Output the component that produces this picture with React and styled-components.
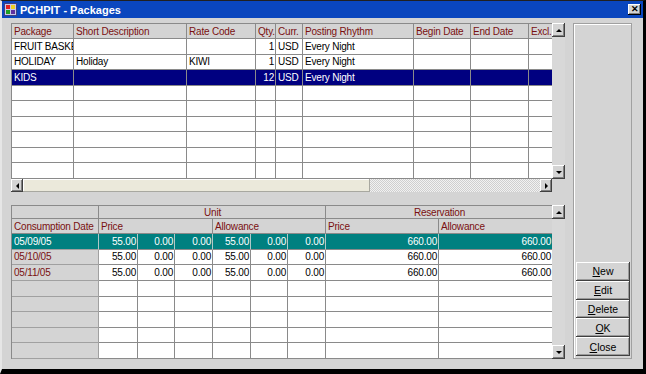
import React from 'react';
import styled, { createGlobalStyle, css } from 'styled-components';

const GlobalStyle = createGlobalStyle`
  body {
    margin: 0;
    background: #d4d4d4;
    font-family: "Liberation Sans", Arial, sans-serif;
    font-size: 10px;
  }
`;

const Window = styled.div`
  width: 646px;
  height: 374px;
  box-sizing: border-box;
  display: flex;
  flex-direction: column;
  background: #d4d4d4;
  border-top: 1px solid #202020;
  border-left: 2px solid #e6e6e6;
  border-right: 3px solid #000;
  border-bottom: 5px solid #000;
`;

const TitleBar = styled.div`
  height: 17px;
  flex: none;
  display: flex;
  align-items: center;
  padding: 0 2px;
  background: #0a46be;
  color: #fff;
`;

const TitleText = styled.span`
  font-weight: bold;
  font-size: 11px;
  margin-left: 3px;
  flex: 1;
`;

const CloseBox = styled.div`
  width: 13px;
  height: 11px;
  background: #d4d4d4;
  box-shadow: inset -1px -1px #000, inset 1px 1px #fff, inset -2px -2px #808080;
  display: flex;
  align-items: center;
  justify-content: center;
  color: #000;
  font-size: 9px;
  font-weight: bold;
  line-height: 1;
`;

const Body = styled.div`
  flex: 1;
  display: grid;
  grid-template-columns: 554px 59px;
  column-gap: 8px;
  padding: 5px 11px 10px 9px;
`;

const LeftColumn = styled.div`
  display: flex;
  flex-direction: column;
  gap: 13px;
`;

const GridBlock = styled.div`
  display: grid;
  grid-template-columns: 541px 13px;
  grid-template-rows: ${p => p.$rows};
`;

const Sheet = styled.div`
  display: grid;
  box-sizing: border-box;
  height: ${p => p.$height}px;
  grid-template-columns: ${p => p.$cols};
  grid-template-rows: ${p => p.$rows};
  border-top: 1px solid #8a8a8a;
  border-left: 1px solid #8a8a8a;
  background: #fff;
  overflow: hidden;
  letter-spacing: -0.2px;
`;

const Cell = styled.div`
  box-sizing: border-box;
  border-right: 1px solid #8a8a8a;
  border-bottom: 1px solid #8a8a8a;
  display: flex;
  align-items: center;
  justify-content: ${p => (p.$align === 'right' ? 'flex-end' : p.$align === 'center' ? 'center' : 'flex-start')};
  padding: 0 1px 0 2px;
  white-space: nowrap;
  overflow: hidden;
  min-width: 0;
  color: #000;
  background: #fff;
  grid-column: ${p => (p.$span ? `span ${p.$span}` : 'auto')};
  ${p =>
    p.$head &&
    css`
      background: #d4d4d4;
      color: #7a1010;
    `}
  ${p =>
    p.$side &&
    css`
      background: #d4d4d4;
      color: #7a1010;
      border-right-color: #a0a0a0;
      border-bottom-color: #a0a0a0;
    `}
  ${p =>
    p.$sel === 'navy' &&
    css`
      background: #000080;
      color: #fff;
    `}
  ${p =>
    p.$sel === 'teal' &&
    css`
      background: #008080;
      color: #fff;
      border-right-color: #b0c8c8;
    `}
`;

const VScroll = styled.div`
  display: flex;
  flex-direction: column;
  background: #d8d8d8;
`;

const Track = styled.div`
  flex: 1;
  background: ${p => (p.$checker ? 'repeating-conic-gradient(#cfcfcf 0 25%, #f2f2f2 0 50%) 0 0 / 2px 2px' : '#d8d8d8')};
`;

const ArrowBtn = styled.div`
  flex: none;
  width: ${p => (p.$h ? '12px' : '13px')};
  height: ${p => (p.$h ? '13px' : '14px')};
  box-sizing: border-box;
  background: #d4d4d4;
  box-shadow: inset -1px -1px #404040, inset 1px 1px #fff, inset -2px -2px #808080;
  display: flex;
  align-items: center;
  justify-content: center;
`;

const Tri = styled.span`
  width: 0;
  height: 0;
  border-style: solid;
  ${p => p.$dir === 'up' && 'border-width: 0 3px 3px 3px; border-color: transparent transparent #000 transparent;'}
  ${p => p.$dir === 'down' && 'border-width: 3px 3px 0 3px; border-color: #000 transparent transparent transparent;'}
  ${p => p.$dir === 'left' && 'border-width: 3px 3px 3px 0; border-color: transparent #000 transparent transparent;'}
  ${p => p.$dir === 'right' && 'border-width: 3px 0 3px 3px; border-color: transparent transparent transparent #000;'}
`;

const HScroll = styled.div`
  display: flex;
  align-items: stretch;
  height: 13px;
`;

const Thumb = styled.div`
  width: 347px;
  flex: none;
  background: #ebe9db;
  box-shadow: inset -1px -1px #a8a8a0, inset 1px 1px #fff;
`;

const Corner = styled.div`
  background: #d4d4d4;
`;

const SidePanel = styled.div`
  box-sizing: border-box;
  border: 1px solid #a0a0a0;
  box-shadow: inset 1px 1px #fff;
  display: flex;
  flex-direction: column;
  justify-content: flex-end;
  padding: 0 1px 2px 2px;
`;

const Button = styled.div`
  height: 18.8px;
  box-sizing: border-box;
  background: #d4d4d4;
  box-shadow: inset -1px -1px #404040, inset 1px 1px #fff, inset -2px -2px #9a9a9a;
  display: flex;
  align-items: center;
  justify-content: center;
  color: #000;
  font-size: 10.5px;
  u {
    text-decoration: underline;
  }
`;

const AppIcon = () => (
  <svg width="13" height="13" viewBox="0 0 13 13">
    <rect x="0.5" y="0.5" width="12" height="12" fill="#c8c8e8" stroke="#404080" />
    <rect x="2" y="2" width="4" height="4" fill="#e02020" />
    <rect x="7" y="2" width="4" height="4" fill="#f0d020" />
    <rect x="2" y="7" width="4" height="4" fill="#20a020" />
    <rect x="7" y="7" width="4" height="4" fill="#6030a0" />
  </svg>
);

const topCols = '62px 113px 69px 20px 27px 111px 57px 58px 24px';
const topHeads = ['Package', 'Short Description', 'Rate Code', 'Qty.', 'Curr.', 'Posting Rhythm', 'Begin Date', 'End Date', 'Excl.'];
const topRows = [
  ['FRUIT BASKET', '', '', '1', 'USD', 'Every Night', '', '', ''],
  ['HOLIDAY', 'Holiday', 'KIWI', '1', 'USD', 'Every Night', '', '', ''],
  ['KIDS', '', '', '12', 'USD', 'Every Night', '', '', ''],
];

const bottomCols = '87px 39px 37px 38px 38px 37px 38px 113px 114px';
const bottomRows = [
  ['05/09/05', '55.00', '0.00', '0.00', '55.00', '0.00', '0.00', '660.00', '660.00'],
  ['05/10/05', '55.00', '0.00', '0.00', '55.00', '0.00', '0.00', '660.00', '660.00'],
  ['05/11/05', '55.00', '0.00', '0.00', '55.00', '0.00', '0.00', '660.00', '660.00'],
];

const blank = n => Array.from({ length: n }, () => Array(9).fill(''));

const App = () => {
  const top = [...topRows, ...blank(6)];
  const bottom = [...bottomRows, ...blank(5)];

  return (
    <>
      <GlobalStyle />
      <Window>
        <TitleBar>
          <AppIcon />
          <TitleText>PCHPIT - Packages</TitleText>
          <CloseBox>✕</CloseBox>
        </TitleBar>
        <Body>
          <LeftColumn>
            <GridBlock $rows="156px 13px">
              <Sheet $height={156} $cols={topCols} $rows="15px repeat(9, 1fr)">
                {topHeads.map(h => (
                  <Cell key={h} $head>
                    {h}
                  </Cell>
                ))}
                {top.map((row, r) =>
                  row.map((v, c) => (
                    <Cell key={`${r}-${c}`} $align={c === 3 ? 'right' : 'left'} $sel={r === 2 ? 'navy' : undefined}>
                      {v}
                    </Cell>
                  ))
                )}
              </Sheet>
              <VScroll>
                <ArrowBtn>
                  <Tri $dir="up" />
                </ArrowBtn>
                <Track />
                <ArrowBtn>
                  <Tri $dir="down" />
                </ArrowBtn>
              </VScroll>
              <HScroll>
                <ArrowBtn $h>
                  <Tri $dir="left" />
                </ArrowBtn>
                <Thumb />
                <Track $checker />
                <ArrowBtn $h>
                  <Tri $dir="right" />
                </ArrowBtn>
              </HScroll>
              <Corner />
            </GridBlock>

            <GridBlock $rows="154px">
              <Sheet $height={154} $cols={bottomCols} $rows="13px 15px repeat(8, 1fr)">
                <Cell $head />
                <Cell $head $span={6} $align="center">
                  Unit
                </Cell>
                <Cell $head $span={2} $align="center">
                  Reservation
                </Cell>
                <Cell $head>Consumption Date</Cell>
                <Cell $head $span={3}>
                  Price
                </Cell>
                <Cell $head $span={3}>
                  Allowance
                </Cell>
                <Cell $head>Price</Cell>
                <Cell $head>Allowance</Cell>
                {bottom.map((row, r) =>
                  row.map((v, c) => (
                    <Cell
                      key={`${r}-${c}`}
                      $align={c === 0 ? 'left' : 'right'}
                      $side={c === 0}
                      $sel={r === 0 ? 'teal' : undefined}
                    >
                      {v}
                    </Cell>
                  ))
                )}
              </Sheet>
              <VScroll>
                <ArrowBtn>
                  <Tri $dir="up" />
                </ArrowBtn>
                <Track />
                <ArrowBtn>
                  <Tri $dir="down" />
                </ArrowBtn>
              </VScroll>
            </GridBlock>
          </LeftColumn>

          <SidePanel>
            <Button>
              <span>
                <u>N</u>ew
              </span>
            </Button>
            <Button>
              <span>
                <u>E</u>dit
              </span>
            </Button>
            <Button>
              <span>
                <u>D</u>elete
              </span>
            </Button>
            <Button>
              <span>
                <u>O</u>K
              </span>
            </Button>
            <Button>
              <span>
                <u>C</u>lose
              </span>
            </Button>
          </SidePanel>
        </Body>
      </Window>
    </>
  );
};

export default App;
